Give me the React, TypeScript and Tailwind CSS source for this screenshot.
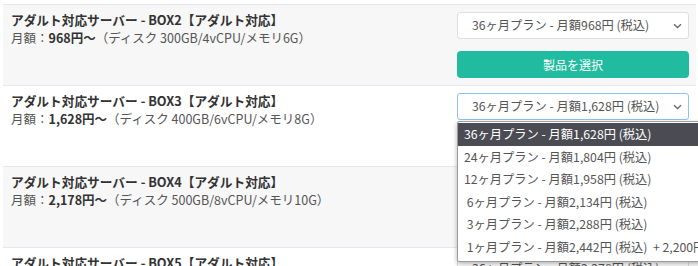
import React from "react";

const Chevron = () => (
  <svg width="9" height="6" viewBox="0 0 9 6" className="shrink-0">
    <path d="M1 1.2l3.5 3.3 3.5-3.3" fill="none" stroke="#6b6b6b" strokeWidth="1.4" />
  </svg>
);

type Row = {
  box: string;
  price: string;
  spec: string;
  plan: string;
  gray: boolean;
  button?: boolean;
  focused?: boolean;
  open?: boolean;
};

const rows: Row[] = [
  { box: "BOX2", price: "968円～", spec: "（ディスク 300GB/4vCPU/メモリ6G）", plan: "36ヶ月プラン - 月額968円 (税込)", gray: true, button: true },
  { box: "BOX3", price: "1,628円～", spec: "（ディスク 400GB/6vCPU/メモリ8G）", plan: "36ヶ月プラン - 月額1,628円 (税込)", gray: false, focused: true, open: true },
  { box: "BOX4", price: "2,178円～", spec: "（ディスク 500GB/8vCPU/メモリ10G）", plan: "36ヶ月プラン - 月額2,178円 (税込)", gray: true },
  { box: "BOX5", price: "2,728円～", spec: "（ディスク 600GB/10vCPU/メモリ12G）", plan: "36ヶ月プラン - 月額2,278円 (税込)", gray: false },
];

const options = [
  "36ヶ月プラン - 月額1,628円 (税込)",
  "24ヶ月プラン - 月額1,804円 (税込)",
  "12ヶ月プラン - 月額1,958円 (税込)",
  "\u00a06ヶ月プラン - 月額2,134円 (税込)",
  "\u00a03ヶ月プラン - 月額2,288円 (税込)",
  "\u00a01ヶ月プラン - 月額2,442円 (税込)\u00a0 + 2,200円",
];

export default function App() {
  return (
    <div className="relative w-[698px] h-[266px] overflow-hidden bg-white font-['Noto_Sans_CJK_JP',sans-serif] text-[12.5px]">
      <div className="pl-[3px] pr-[2px] pt-[4px]">
        {rows.map((r) => (
          <div
            key={r.box}
            className={`flex h-[81px] border-t border-[#e3e8ee] pl-[8px] pr-[7px] pt-[6px] ${r.gray ? "bg-[#f7f7f7]" : "bg-white"}`}
          >
            <div className="flex-1 leading-[18px]">
              <div className="font-bold text-[#333] text-[12.7px]">アダルト対応サーバー - {r.box}【アダルト対応】</div>
              <div className="text-[#555]">
                月額：<span className="font-bold text-[#333]">{r.price}</span>
                {r.spec}
              </div>
            </div>
            <div className="w-[232px] mt-[1px] flex flex-col gap-[12px]">
              <div className="relative">
                <div
                  className={`flex items-center justify-between h-[27px] bg-white rounded-[3px] border pl-[14px] pr-[6px] text-[#555] text-[12.25px] ${r.focused ? "border-[#8cc3f0]" : "border-[#dedede]"}`}
                >
                  <span>{r.plan}</span>
                  <Chevron />
                </div>
                {r.open && (
                  <div className="absolute z-10 left-0 top-[28px] w-[260px] bg-white border border-[#9c9c9c] rounded-[2px] shadow-[0_2px_5px_rgba(0,0,0,0.3)] pt-[1px] pb-[3px] text-[#555] text-[12.25px]">
                    {options.map((o, i) => (
                      <div
                        key={o}
                        className={`h-[22.5px] leading-[22.5px] pl-[6px] whitespace-nowrap ${i === 0 ? "bg-[#4b4b54] text-white" : ""}`}
                      >
                        {o}
                      </div>
                    ))}
                  </div>
                )}
              </div>
              {r.button && (
                <div className="h-[27px] rounded-[4px] bg-[#21bba0] text-white text-[12px] flex items-center justify-center">
                  製品を選択
                </div>
              )}
            </div>
          </div>
        ))}
      </div>
    </div>
  );
}
